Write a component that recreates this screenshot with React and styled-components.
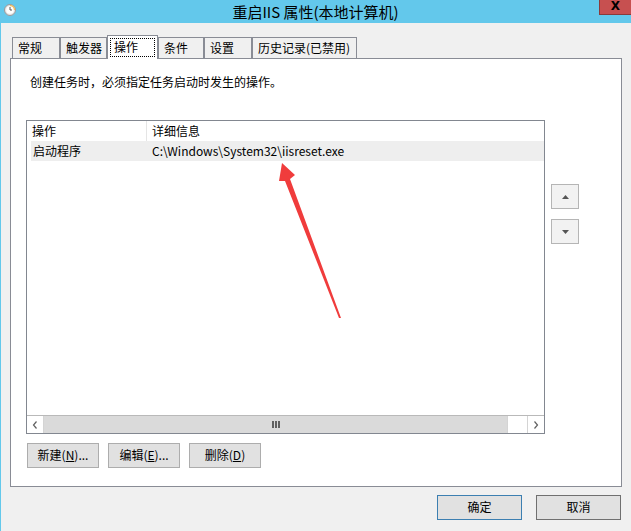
import styled, { createGlobalStyle } from "styled-components";

const GlobalStyle = createGlobalStyle`
  html, body {
    margin: 0;
    padding: 0;
    background: #f0f0f0;
  }
  body {
    font-family: "Noto Sans CJK SC", "Noto Sans", sans-serif;
    font-size: 12px;
    color: #000;
  }
  * {
    box-sizing: border-box;
  }
`;

const Window = styled.div`
  width: 631px;
  height: 531px;
  display: flex;
  flex-direction: column;
  overflow: hidden;
  background: #f0f0f0;
`;

const TitleBar = styled.div`
  height: 23px;
  flex: none;
  background: #63c8eb;
  display: grid;
  grid-template-columns: 1fr auto 1fr;
  align-items: center;
`;

const TitleIcon = styled.div`
  display: flex;
  padding-left: 4px;
  align-self: start;
  padding-top: 4px;
`;

const TitleText = styled.div`
  font-size: 15px;
  line-height: 23px;
`;

const CloseButton = styled.div`
  justify-self: end;
  align-self: start;
  width: 32px;
  height: 15px;
  background: #c75050;
  border: 1px solid #8a3b3b;
  border-top: none;
  border-right: none;
  display: flex;
  align-items: center;
  justify-content: center;
  font-family: "DejaVu Sans", sans-serif;
  font-weight: bold;
  font-size: 12px;
  line-height: 1;
  padding-bottom: 2px;
`;

const Body = styled.div`
  flex: 1;
  border-left: 1px solid #63c8eb;
  padding: 12px 9px 0 9px;
  display: flex;
  flex-direction: column;
`;

const TabStrip = styled.div`
  display: flex;
  align-items: flex-end;
  height: 23px;
  padding-left: 2px;
`;

const Tab = styled.div`
  position: relative;
  width: ${(p) => p.$w}px;
  height: ${(p) => (p.$active ? 24 : 21)}px;
  margin-bottom: ${(p) => (p.$active ? -1 : 0)}px;
  background: ${(p) => (p.$active ? "#fff" : "#f0f0f0")};
  border: 1px solid #898c95;
  border-bottom: none;
  z-index: ${(p) => (p.$active ? 1 : 0)};
  padding: ${(p) => (p.$active ? "2px 2px 0 2px" : "0 0 0 5px")};
  line-height: 20px;
  white-space: nowrap;
`;

const Focus = styled.div`
  outline: 1px dotted #000;
  outline-offset: -1px;
  height: 19px;
  line-height: 17px;
  padding-left: 4px;
`;

const Panel = styled.div`
  position: relative;
  width: 612px;
  height: 429px;
  border: 1px solid #898c95;
  background: #fff;
  padding: 14px 0 0 15px;
`;

const Desc = styled.p`
  margin: 0 0 0 4px;
  line-height: 18px;
`;

const ListArea = styled.div`
  display: flex;
  gap: 6px;
  margin-top: 29px;
`;

const ListBox = styled.div`
  width: 519px;
  height: 314px;
  border: 1px solid #828790;
  display: flex;
  flex-direction: column;
`;

const HeaderRow = styled.div`
  display: grid;
  grid-template-columns: 120px 1fr;
  height: 20px;
  line-height: 19px;
`;

const HeadCell = styled.div`
  padding-left: 5px;
  border-right: ${(p) => (p.$divider ? "1px solid #e5e5e5" : "none")};
`;

const Row = styled.div`
  display: grid;
  grid-template-columns: 116px 1fr;
  height: 20px;
  line-height: 20px;
  margin-left: 4px;
  background: #eeeeee;
`;

const Cell = styled.div`
  padding-left: ${(p) => p.$pad}px;
  white-space: nowrap;
`;

const Spacer = styled.div`
  flex: 1;
`;

const ScrollBar = styled.div`
  height: 18px;
  display: grid;
  grid-template-columns: 17px 1fr 20px 17px;
  border-top: 1px solid #b9b9b9;
`;

const ScrollArrow = styled.div`
  display: flex;
  align-items: center;
  justify-content: center;
  background: #fff;
  border-left: ${(p) => (p.$right ? "1px solid #d4d4d4" : "none")};
  border-right: ${(p) => (p.$right ? "none" : "1px solid #d4d4d4")};
`;

const Thumb = styled.div`
  background: #dadada;
  display: flex;
  align-items: center;
  justify-content: center;
  gap: 1px;
`;

const Grip = styled.span`
  width: 2px;
  height: 7px;
  background: #606060;
`;

const Track = styled.div`
  background: #fff;
  border-left: 1px solid #d4d4d4;
`;

const SideButtons = styled.div`
  display: flex;
  flex-direction: column;
  gap: 10px;
  margin-top: 64px;
`;

const MoveButton = styled.div`
  width: 28px;
  height: 25px;
  background: #f2f2f2;
  border: 1px solid #b5b5b5;
  display: flex;
  align-items: center;
  justify-content: center;
`;

const ButtonRow = styled.div`
  display: flex;
  gap: 9px;
  margin: 9px 0 0 1px;
`;

const Button = styled.div`
  width: ${(p) => p.$w}px;
  height: 25px;
  background: #e1e1e1;
  border: 1px solid ${(p) => (p.$default ? "#3c7fb1" : p.$dark ? "#707070" : "#adadad")};
  display: flex;
  align-items: center;
  justify-content: center;
  line-height: 1;
  padding-bottom: 1px;
`;

const Key = styled.span`
  text-decoration: underline;
`;

const Footer = styled.div`
  display: flex;
  justify-content: flex-end;
  gap: 14px;
  padding: 8px 1px 0 0;
`;

const ArrowOverlay = styled.svg`
  position: absolute;
  inset: 0;
  width: 100%;
  height: 100%;
  pointer-events: none;
`;

const tabs = [
  { label: "常规", w: 48 },
  { label: "触发器", w: 47 },
  { label: "操作", w: 51, active: true },
  { label: "条件", w: 46 },
  { label: "设置", w: 48 },
  { label: "历史记录(已禁用)", w: 105 },
];

const ClockIcon = () => (
  <svg width="12" height="12" viewBox="0 0 12 12">
    <circle cx="6" cy="6" r="5.5" fill="#e6e6e6" stroke="#9a9a9a" />
    <path d="M6 6 L6 0.8 A5.2 5.2 0 0 1 11.2 6 Z" fill="#f0c060" />
    <circle cx="6" cy="6" r="3.8" fill="#fff" />
    <path d="M6 3 V6 H8" fill="none" stroke="#555" strokeWidth="1" />
  </svg>
);

const Chevron = ({ dir }) => (
  <svg width="6" height="8" viewBox="0 0 6 8">
    <polyline
      points={dir === "left" ? "4.5,0.5 1.5,4 4.5,7.5" : "1.5,0.5 4.5,4 1.5,7.5"}
      fill="none"
      stroke="#606060"
      strokeWidth="1.2"
    />
  </svg>
);

const Triangle = ({ up }) => (
  <svg width="7" height="4" viewBox="0 0 7 4">
    <polygon points={up ? "3.5,0 7,4 0,4" : "0,0 7,0 3.5,4"} fill="#555" />
  </svg>
);

export default function App() {
  return (
    <>
      <GlobalStyle />
      <Window>
        <TitleBar>
          <TitleIcon>
            <ClockIcon />
          </TitleIcon>
          <TitleText>重启IIS 属性(本地计算机)</TitleText>
          <CloseButton>X</CloseButton>
        </TitleBar>
        <Body>
          <TabStrip>
            {tabs.map((t) => (
              <Tab key={t.label} $w={t.w} $active={t.active}>
                {t.active ? <Focus>{t.label}</Focus> : t.label}
              </Tab>
            ))}
          </TabStrip>
          <Panel>
            <Desc>创建任务时，必须指定任务启动时发生的操作。</Desc>
            <ListArea>
              <ListBox>
                <HeaderRow>
                  <HeadCell $divider>操作</HeadCell>
                  <HeadCell>详细信息</HeadCell>
                </HeaderRow>
                <Row>
                  <Cell $pad={2}>启动程序</Cell>
                  <Cell $pad={5}>C:\Windows\System32\iisreset.exe</Cell>
                </Row>
                <Spacer />
                <ScrollBar>
                  <ScrollArrow>
                    <Chevron dir="left" />
                  </ScrollArrow>
                  <Thumb>
                    <Grip />
                    <Grip />
                    <Grip />
                  </Thumb>
                  <Track />
                  <ScrollArrow $right>
                    <Chevron dir="right" />
                  </ScrollArrow>
                </ScrollBar>
              </ListBox>
              <SideButtons>
                <MoveButton>
                  <Triangle up />
                </MoveButton>
                <MoveButton>
                  <Triangle />
                </MoveButton>
              </SideButtons>
            </ListArea>
            <ButtonRow>
              <Button $w={72}>
                新建(<Key>N</Key>)...
              </Button>
              <Button $w={72}>
                编辑(<Key>E</Key>)...
              </Button>
              <Button $w={72}>
                删除(<Key>D</Key>)
              </Button>
            </ButtonRow>
            <ArrowOverlay viewBox="0 0 610 427">
              <polygon
                points="271,104 284,116 279,120 330,259 328,259 274,122 268,122"
                fill="#f03c3c"
              />
            </ArrowOverlay>
          </Panel>
          <Footer>
            <Button $w={85} $default>
              确定
            </Button>
            <Button $w={85} $dark>
              取消
            </Button>
          </Footer>
        </Body>
      </Window>
    </>
  );
}
